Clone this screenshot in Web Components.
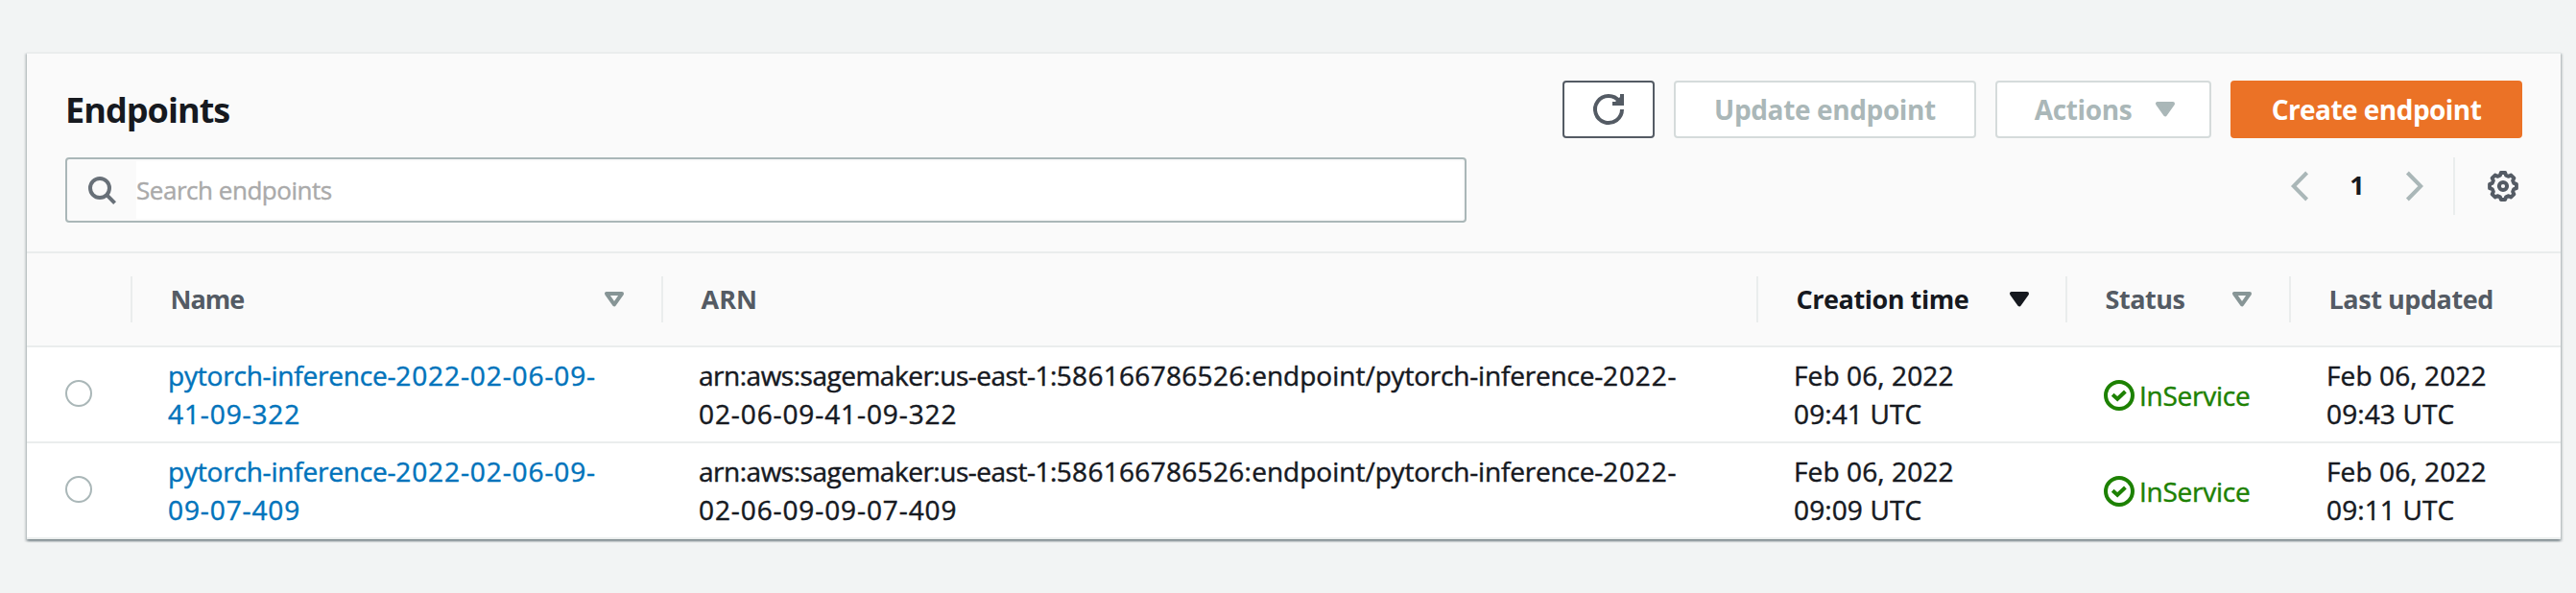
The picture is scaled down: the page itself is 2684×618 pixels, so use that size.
<!DOCTYPE html>
<html lang="en">
<head>
<meta charset="utf-8">
<title>Endpoints</title>
<style>
html, body { margin: 0; height: 100%; background: #f2f4f4; }
body { font-family: "Open Sans", "Noto Sans", sans-serif; font-size: 28px; color: #16191f; overflow: hidden; }
</style>
</head>
<body>
<endpoint-panel></endpoint-panel>
<script>
const define = (name, html, init) => {
  const tpl = document.createElement('template');
  tpl.innerHTML = html;
  customElements.define(name, class extends HTMLElement {
    connectedCallback() {
      if (this.shadowRoot) return;
      const root = this.attachShadow({ mode: 'open' });
      root.append(tpl.content.cloneNode(true));
      if (init) init(this, root);
    }
  });
};

// Outline of an eight-toothed cog centred in a 32x32 box
const cog = () => {
  const pts = [];
  for (let k = 0; k < 8; k++) {
    for (const [r, d] of [[11.7, -15], [14.1, -9], [14.1, 9], [11.7, 15]]) {
      const a = (k * 45 + d) * Math.PI / 180;
      pts.push((16 + r * Math.sin(a)).toFixed(2) + ' ' + (16 - r * Math.cos(a)).toFixed(2));
    }
  }
  return 'M' + pts.join('L') + 'Z';
};

const ICONS = {
  refresh: [32, 32, '<path d="M30 16A14 14 0 1 1 27.2 7.6"/><path d="M30 0V10H20"/><path d="M23 8L28 3V8Z" fill="currentColor" stroke="none"/>'],
  search: [32, 32, '<circle cx="12" cy="12" r="10"/><path d="M18.7 18.7L27.6 27.6"/>'],
  caret: [20, 16, '<path d="M2 2H18L10 13.4Z" fill="currentColor" stroke-linejoin="round"/>'],
  'caret-open': [20, 16, '<path d="M2 2H18L10 13.4Z" stroke-linejoin="round"/>'],
  prev: [18, 32, '<path d="M16.6 2L2.8 16L16.6 30"/>'],
  next: [18, 32, '<path d="M1.4 2L15.2 16L1.4 30"/>'],
  gear: [32, 32, '<path stroke-width="3.9" stroke-linejoin="round" d="' + cog() + '"/><circle cx="16" cy="16" r="4.1"/>'],
  check: [32, 32, '<circle cx="16" cy="16" r="14"/><path d="M9.2 15.3L14.2 19.8L22.4 12"/>']
};

define('ui-icon', '<style>:host{display:block;flex:none;line-height:0}svg{display:block;overflow:visible}</style>', (el, root) => {
  const [w, h, body] = ICONS[el.getAttribute('name')];
  const box = document.createElement('div');
  box.innerHTML = `<svg width="${w}" height="${h}" viewBox="0 0 ${w} ${h}" fill="none" stroke="currentColor" stroke-width="4">${body}</svg>`;
  root.append(box);
});

define('ui-button', `<style>
:host{display:flex;align-items:center;justify-content:center;box-sizing:border-box;height:60px;width:var(--w);
 padding-bottom:1px;border:2px solid #d5dbdb;border-radius:4px;background:#fff;color:#aab7b8;font-weight:700;
 letter-spacing:-.37px;line-height:36px;white-space:nowrap;gap:25px}
:host([kind=normal]){border-color:#545b64;color:#545b64;padding:0}
:host([kind=menu]){padding-left:3px}
:host([kind=primary]){background:#eb7226;border-color:#eb7226;color:#fff;letter-spacing:-.54px}
</style><slot></slot>`);

define('search-field', `<style>
:host{display:flex;box-sizing:border-box;width:1460px;height:68px;padding:2px;border:2px solid #aab7b8;border-radius:4px;background:#fafafa}
.glyph{width:70px;box-sizing:border-box;padding:16px 0 0 20px;color:#687078}
.value{flex:1;display:flex;align-items:center;background:#fff;color:#aaa;font-size:26px;letter-spacing:-.47px;line-height:36px;-webkit-text-stroke:.4px}
</style><div class="glyph"><ui-icon name="search"></ui-icon></div><div class="value"><slot></slot></div>`);

define('page-nav', `<style>
:host{display:flex;align-items:center;height:60px;color:#aab7b8}
.n{width:102px;text-align:center;font-weight:700;font-size:27px;line-height:36px;color:#16191f;padding-bottom:2px}
.rule{width:2px;height:60px;margin:0 34px 0 31px;background:#eaeded}
.gear{color:#545b64;margin-right:4px}
</style><ui-icon name="prev"></ui-icon><div class="n"><slot></slot></div><ui-icon name="next"></ui-icon><div class="rule"></div><ui-icon class="gear" name="gear"></ui-icon>`);

define('head-cell', `<style>
:host{display:flex;align-items:center;justify-content:space-between;box-sizing:border-box;height:48px;padding:0 39px 0 39.5px;
 border-right:2px solid #eaeded;color:#545b64;font-size:27px;font-weight:700;letter-spacing:-.45px;line-height:36px;white-space:nowrap}
:host([active]){color:#16191f;padding-right:38px}
:host([last]){border-right:0}
ui-icon{color:#879596}
:host([active]) ui-icon{color:#16191f}
</style><span><slot></slot></span>`, (el, root) => {
  if (!el.hasAttribute('sort')) return;
  const i = document.createElement('ui-icon');
  i.setAttribute('name', el.getAttribute('sort'));
  root.append(i);
});

define('status-badge', `<style>
:host{display:flex;align-items:center;gap:5px;color:#1d8102;letter-spacing:-.25px;line-height:40px;margin-left:1px}
span{padding-bottom:1px}
</style><ui-icon name="check"></ui-icon><span><slot></slot></span>`);

define('endpoint-row', `<style>
:host{display:grid;grid-template-columns:110px 553px 1141px 322px 233px 281px;align-items:center;box-sizing:border-box;height:100px;
 border-bottom:2px solid #eaeded;background:#fff;line-height:40px;white-space:nowrap;-webkit-text-stroke:.45px}
.radio{width:28px;height:28px;box-sizing:border-box;border:2px solid #aab7b8;border-radius:50%;margin:0 0 2px 40px}
.c{padding:0 0 0 37px}
.s{padding-top:2px}
.name{color:#0073bb}
.l{letter-spacing:-.2px}
.d{letter-spacing:.9px}
.a{letter-spacing:-.49px}
.i{letter-spacing:.3px}
.t{letter-spacing:.12px}
</style>
<div class="radio"></div>
<div class="c name"><span class="l">pytorch-inference-</span><span class="d">2022-02-06-09-<br><span class="tail"></span></span></div>
<div class="c"><span class="a">arn:aws:sagemaker:us-east-1:</span><span class="i">586166786526:</span>endpoint/<span class="l">pytorch-inference-</span><span class="d">2022-<br>02-06-09-<span class="tail"></span></span></div>
<div class="c t">Feb 06, 2022<br><slot name="created"></slot></div>
<div class="c s"><status-badge>InService</status-badge></div>
<div class="c t">Feb 06, 2022<br><slot name="updated"></slot></div>`, (el, root) => {
  for (const t of root.querySelectorAll('.tail')) t.textContent = el.getAttribute('suffix');
});

define('endpoint-panel', `<style>
:host{display:block;box-sizing:border-box;padding:54px 16px 0 28px}
.panel{border-top:2px solid #eaeded;background:#fafafa;box-shadow:0 2px 2px rgba(0,28,36,.3),2px 2px 2px rgba(0,28,36,.15),-2px 2px 2px rgba(0,28,36,.15)}
header{display:flex;flex-direction:column;gap:20px;box-sizing:border-box;height:208px;padding:28px 40px 0;border-bottom:2px solid #eaeded}
.bar{display:flex;justify-content:space-between}
.bar.top{align-items:center}
h1{margin:0;padding-top:2px;font-size:36px;line-height:44px;letter-spacing:-.95px}
.actions{display:flex;gap:20px}
.head{display:grid;grid-template-columns:110px 553px 1141px 322px 233px 281px;padding:24px 0;border-bottom:2px solid #eaeded}
</style>
<section class="panel">
 <header>
  <div class="bar top"><h1>Endpoints</h1>
   <div class="actions">
    <ui-button kind="normal" style="--w:96px"><ui-icon name="refresh"></ui-icon></ui-button>
    <ui-button style="--w:315px">Update endpoint</ui-button>
    <ui-button kind="menu" style="--w:225px">Actions<ui-icon name="caret"></ui-icon></ui-button>
    <ui-button kind="primary" style="--w:304px">Create endpoint</ui-button>
   </div>
  </div>
  <div class="bar"><search-field>Search endpoints</search-field><page-nav>1</page-nav></div>
 </header>
 <div class="head">
  <head-cell></head-cell>
  <head-cell sort="caret-open" style="letter-spacing:-1px">Name</head-cell>
  <head-cell style="letter-spacing:0">ARN</head-cell>
  <head-cell active sort="caret">Creation time</head-cell>
  <head-cell sort="caret-open">Status</head-cell>
  <head-cell last>Last updated</head-cell>
 </div>
 <endpoint-row suffix="41-09-322"><span slot="created">09:41 UTC</span><span slot="updated">09:43 UTC</span></endpoint-row>
 <endpoint-row suffix="09-07-409"><span slot="created">09:09 UTC</span><span slot="updated">09:11 UTC</span></endpoint-row>
</section>`);
</script>
</body>
</html>
